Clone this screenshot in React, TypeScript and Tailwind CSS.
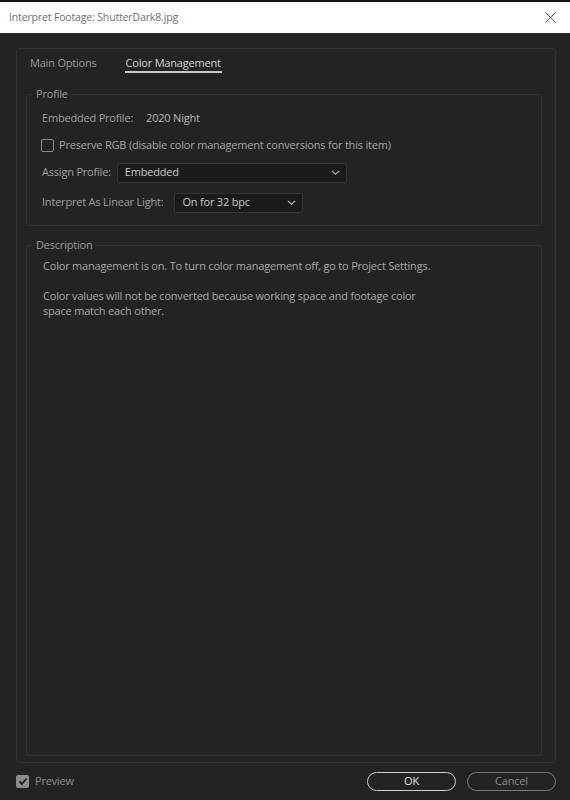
import React from "react";

const Chevron = () => (
  <svg width="9" height="5" viewBox="0 0 9 5" fill="none">
    <path d="M0.8 0.8L4.5 4.2L8.2 0.8" stroke="#b8b8b8" strokeWidth="1.1" />
  </svg>
);

export default function App() {
  const font = { fontFamily: '"Open Sans", "Noto Sans", sans-serif' };
  return (
    <div className="w-[570px] h-[800px] bg-[#232323] flex flex-col overflow-hidden text-[11px] tracking-[-0.2px]" style={font}>
      <div className="h-[2px] bg-[#141414]" />
      <div className="h-[31px] bg-white flex items-center justify-between pl-[9px] pr-[14px]">
        <span className="text-[#707070] text-[10.5px] tracking-[-0.15px]">Interpret Footage: ShutterDark8.jpg</span>
        <svg width="11" height="11" viewBox="0 0 11 11">
          <path d="M0.5 0.5L10.5 10.5M10.5 0.5L0.5 10.5" stroke="#555" strokeWidth="1" />
        </svg>
      </div>
      <div className="flex-1 flex flex-col px-[14px] pt-[15px]">
        <div className="h-[715px] ml-[2px] border border-[#303030] rounded-[3px] flex flex-col">
          <div className="flex h-[44px] pl-[13px] pt-[4px] gap-[29px] items-start">
            <div className="h-[20px] flex items-center text-[#9a9a9a]">Main Options</div>
            <div className="h-[20px] flex items-center text-[#d4d4d4] relative">
              <span>Color Management</span>
              <div className="absolute left-[-1px] right-[-1px] bottom-[0px] h-[2px] bg-[#c8c8c8]" />
            </div>
          </div>
          <fieldset className="ml-[9px] mr-[13px] border border-[#303030] rounded-[3px] h-[140px] px-[15px] -mt-[7px]">
            <legend className="-ml-[10px] px-[4px] text-[#9a9a9a]">Profile</legend>
            <div className="flex items-center h-[16px] mt-[8px] text-[#a0a0a0]">
              <span>Embedded Profile:</span>
              <span className="ml-[13px] text-[#b8b8b8]">2020 Night</span>
            </div>
            <div className="flex items-center h-[16px] mt-[11px] text-[#a6a6a6]">
              <div className="w-[13px] h-[13px] border-[1.5px] border-[#8a8a8a] rounded-[2px] -ml-[1px]" />
              <span className="ml-[5px]">Preserve RGB (disable color management conversions for this item)</span>
            </div>
            <div className="flex items-center h-[20px] mt-[9px] text-[#a0a0a0]">
              <span>Assign Profile:</span>
              <div className="ml-[6px] w-[230px] h-[20px] bg-[#1a1a1a] border border-[#333] rounded-[2px] flex items-center justify-between pl-[7px] pr-[6px] text-[#c8c8c8]">
                <span>Embedded</span>
                <Chevron />
              </div>
            </div>
            <div className="flex items-center h-[20px] mt-[10px] text-[#a0a0a0]">
              <span>Interpret As Linear Light:</span>
              <div className="ml-[11px] w-[129px] h-[20px] bg-[#1a1a1a] border border-[#333] rounded-[2px] flex items-center justify-between pl-[7px] pr-[6px] text-[#c8c8c8]">
                <span>On for 32 bpc</span>
                <Chevron />
              </div>
            </div>
          </fieldset>
          <fieldset className="ml-[9px] mr-[13px] mt-[11px] border border-[#303030] rounded-[3px] flex-1 mb-[6px] pl-[16px] pr-[15px]">
            <legend className="-ml-[11px] px-[4px] text-[#9a9a9a]">Description</legend>
            <div className="text-[#a8a8a8] leading-[15px] mt-[4px]">
              <p>Color management is on. To turn color management off, go to Project Settings.</p>
              <p className="mt-[15px]">Color values will not be converted because working space and footage color<br />space match each other.</p>
            </div>
          </fieldset>
        </div>
        <div className="flex-1 flex items-center justify-between pl-[2px]">
          <div className="flex items-center gap-[6px]">
            <div className="w-[13px] h-[13px] bg-[#8c8c8c] rounded-[2px] flex items-center justify-center">
              <svg width="10" height="9" viewBox="0 0 10 9">
                <path d="M1.5 4.5L4 7L8.5 1.5" stroke="#232323" strokeWidth="1.8" fill="none" />
              </svg>
            </div>
            <span className="text-[#8c8c8c]">Preview</span>
          </div>
          <div className="flex gap-[11px]">
            <div className="w-[89px] h-[19px] rounded-full border border-[#d0d0d0] flex items-center justify-center text-[#e0e0e0]">OK</div>
            <div className="w-[89px] h-[19px] rounded-full border border-[#7a7a7a] flex items-center justify-center text-[#8a8a8a]">Cancel</div>
          </div>
        </div>
      </div>
    </div>
  );
}
